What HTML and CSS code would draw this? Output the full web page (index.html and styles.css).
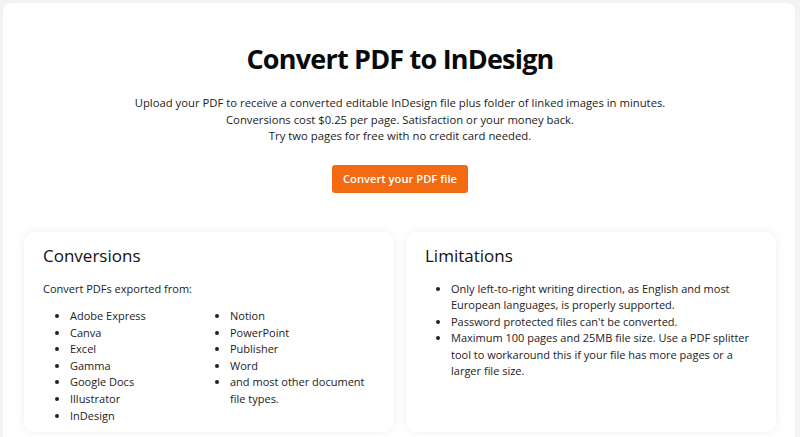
FILE: index.html
```html
<!DOCTYPE html>
<html lang="en">
<head>
<meta charset="utf-8">
<title>Convert PDF to InDesign</title>
<link rel="stylesheet" href="styles.css">
</head>
<body>
<main class="page">
  <section class="hero">
    <h1 class="title">Convert PDF to InDesign</h1>
    <p class="lead">Upload your PDF to receive a converted editable InDesign file plus folder of linked images in minutes.<br>Conversions cost $0.25 per page. Satisfaction or your money back.<br>Try two pages for free with no credit card needed.</p>
    <a class="btn" href="#">Convert your PDF file</a>
  </section>
  <section class="cards">
    <div class="card">
      <h2 class="card-title">Conversions</h2>
      <p class="card-text">Convert PDFs exported from:</p>
      <div class="cols">
        <ul class="list">
          <li>Adobe Express</li>
          <li>Canva</li>
          <li>Excel</li>
          <li>Gamma</li>
          <li>Google Docs</li>
          <li>Illustrator</li>
          <li>InDesign</li>
        </ul>
        <ul class="list">
          <li>Notion</li>
          <li>PowerPoint</li>
          <li>Publisher</li>
          <li>Word</li>
          <li>and most other document file types.</li>
        </ul>
      </div>
    </div>
    <div class="card">
      <h2 class="card-title">Limitations</h2>
      <ul class="list limits">
        <li>Only left-to-right writing direction, as English and most European languages, is properly supported.</li>
        <li>Password protected files can't be converted.</li>
        <li>Maximum 100 pages and 25MB file size. Use a PDF splitter tool to workaround this if your file has more pages or a larger file size.</li>
      </ul>
    </div>
  </section>
</main>
</body>
</html>
```
FILE: styles.css
```css
html, body {
  margin: 0;
  padding: 0;
}
body {
  background: #f3f3f3;
  font-family: "Open Sans", "Liberation Sans", sans-serif;
  color: #222;
  padding: 3px 5px 0 3px;
  height: 437px;
  box-sizing: border-box;
  overflow: hidden;
}
.page {
  background: #fff;
  border-radius: 8px 8px 0 0;
  padding: 0 19px 20px 21px;
  min-height: 440px;
  box-sizing: border-box;
}
.hero {
  text-align: center;
  padding-top: 37px;
}
.title {
  margin: 0;
  font-size: 27px;
  line-height: 38px;
  font-weight: 700;
  color: #0a0a0a;
  letter-spacing: -0.8px;
}
.lead {
  margin: 17px 0 0;
  font-size: 11.3px;
  line-height: 16.5px;
  color: #222;
}
.btn {
  display: inline-block;
  margin-top: 20px;
  width: 136px;
  height: 28px;
  line-height: 28px;
  background: #f26b12;
  color: #fff;
  font-size: 11.2px;
  font-weight: 600;
  text-decoration: none;
  border-radius: 3px;
}
.cards {
  display: grid;
  grid-template-columns: 1fr 1fr;
  gap: 12px;
  margin-top: 39px;
}
.card {
  background: #fff;
  border-radius: 10px;
  box-shadow: 0 0 8px rgba(0, 0, 0, 0.07);
  padding: 12px 19px 10px;
  height: 200px;
  box-sizing: border-box;
}
.card-title {
  margin: 0;
  font-size: 17px;
  line-height: 24px;
  font-weight: 500;
  color: #111;
}
.card-text {
  margin: 13px 0 0;
  font-size: 11px;
  line-height: 16.6px;
}
.cols {
  display: grid;
  grid-template-columns: 160px 145px;
  padding-left: 27px;
  margin-top: 11px;
}
.list {
  margin: 0;
  padding: 0;
  list-style: disc;
  font-size: 11px;
  line-height: 16.6px;
}
.list li {
  margin: 0;
}
.limits {
  margin-top: 13px;
  padding-left: 26px;
}
```
